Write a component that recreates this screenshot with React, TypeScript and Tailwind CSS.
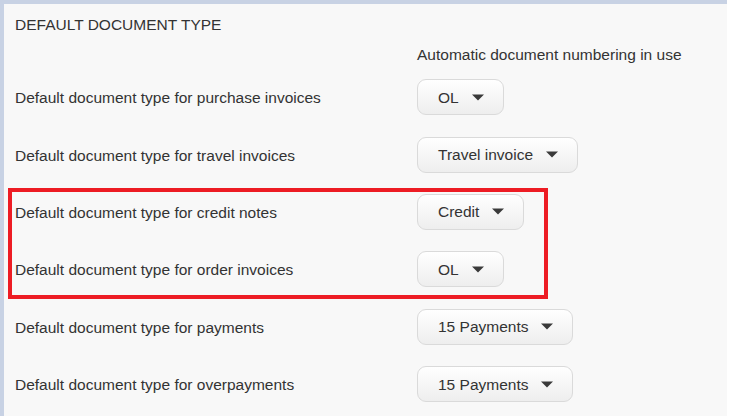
import React from "react";

const rows: { label: string; value: string }[] = [
  { label: "Default document type for purchase invoices", value: "OL" },
  { label: "Default document type for travel invoices", value: "Travel invoice" },
  { label: "Default document type for credit notes", value: "Credit" },
  { label: "Default document type for order invoices", value: "OL" },
  { label: "Default document type for payments", value: "15 Payments" },
  { label: "Default document type for overpayments", value: "15 Payments" },
];

function Caret() {
  return (
    <svg width="12" height="7" viewBox="0 0 12 7" className="shrink-0">
      <path d="M0 0.5 L12 0.5 L6 6.5 Z" fill="#3a3a3a" />
    </svg>
  );
}

function SelectButton({ value }: { value: string }) {
  return (
    <div className="flex h-[36px] items-center gap-[13px] rounded-[9px] border border-[#dadada] bg-gradient-to-b from-white to-[#eeeeee] pl-[20px] pr-[19px] text-[15.5px] leading-[18px] text-[#333]">
      <span className="pt-[1px]">{value}</span>
      <Caret />
    </div>
  );
}

export default function App() {
  return (
    <div
      className="relative h-[416px] w-[730px] overflow-hidden bg-white"
      style={{ fontFamily: '"Liberation Sans", Arial, sans-serif' }}
    >
      <div className="h-[416px] w-[727px] border-l-4 border-t-4 border-[#c8d2e4] bg-[#f8f8f8] pl-[11px] pt-[12px] text-[15.5px] leading-[18px] text-[#333]">
        <div className="h-[18px]">DEFAULT DOCUMENT TYPE</div>
        <div className="ml-[402px] mt-[12px] h-[18px]">Automatic document numbering in use</div>
        <div className="mt-[4.5px] flex flex-col">
          {rows.map((r, i) => (
            <div key={i} className="flex h-[57.4px] items-center">
              <div className="w-[402px] pt-[2px]">{r.label}</div>
              <SelectButton value={r.value} />
            </div>
          ))}
        </div>
      </div>
      <div className="pointer-events-none absolute left-[8px] top-[188px] h-[111px] w-[540px] border-4 border-[#ed1c24]" />
    </div>
  );
}
